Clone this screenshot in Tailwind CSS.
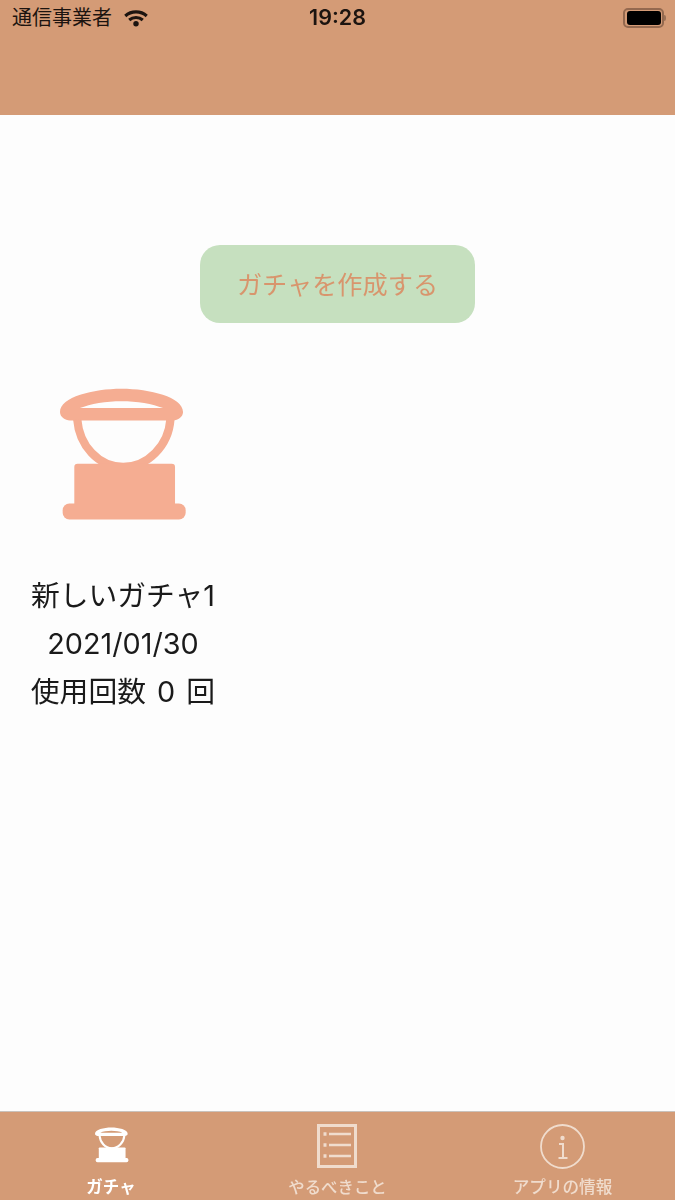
<!DOCTYPE html>
<html lang="ja">

<head>
  <meta charset="UTF-8">
  <meta name="viewport" content="width=device-width, initial-scale=1.0">
  <title>ガチャ</title>
  <script src="https://cdn.jsdelivr.net/npm/@tailwindcss/browser@4"></script>
</head>

<body class="bg-[#fdfdfd] font-['Inter','Noto_Sans_CJK_JP',sans-serif]">
  <div class="flex h-[1200px] w-[675px] flex-col overflow-hidden blur-[0.6px]">
    <!-- status bar + nav bar -->
    <header class="h-[115px] shrink-0 bg-[#d49b76]">
      <div class="grid h-[36px] grid-cols-3 items-center px-3 text-[#1c1410]">
        <div class="flex items-center gap-[12px]">
          <span class="text-[20px] leading-none">通信事業者</span>
          <svg class="h-[17px] w-[24px]" viewBox="0 0 23 16" fill="none" stroke="currentColor" stroke-width="3">
            <path d="M1.2 5.6C7 .4 16 .4 21.8 5.6" />
            <path d="M5 9.4c3.7-3.2 9.3-3.2 13 0" />
            <circle cx="11.5" cy="13" r="2.6" fill="currentColor" stroke="none" />
          </svg>
        </div>
        <div class="text-center text-[21.5px] leading-none font-semibold">19:28</div>
        <div class="-mr-[3px] flex items-center justify-end">
          <div class="flex h-[20px] w-[41px] items-center justify-center rounded-[5px] border-2 border-[#94694f]">
            <div class="h-[14px] w-[34px] rounded-[3px] bg-black"></div>
          </div>
          <div class="h-[6px] w-[2px] rounded-r-sm bg-[#9a7157]"></div>
        </div>
      </div>
    </header>

    <main class="flex grow flex-col">
      <div class="mt-[130px] flex justify-center">
        <button type="button" class="h-[78px] w-[275px] rounded-[20px] bg-[#c6e0bf] pt-[3px] text-[25.2px] text-[#d8956d]">ガチャを作成する</button>
      </div>

      <div class="mt-[64px] flex w-[248px] flex-col items-center">
        <svg class="h-[135px] w-[128px] text-[#f5ad92]" viewBox="120 50 385 405" fill="currentColor">
          <path fill-rule="evenodd" d="M120 125C120 80 220 55 305 55s185 25 185 70c0 15-15 25-30 25H150c-15 0-30-10-30-25ZM180 113c30-13 80-21 125-21s95 8 125 21Z" />
          <path fill="none" stroke="currentColor" stroke-width="25" d="M172 148C178 225 235 290 310 290C385 290 446 225 452 148" />
          <rect x="163" y="280" width="303" height="130" rx="10" />
          <rect x="128" y="400" width="370" height="48" rx="20" />
        </svg>
        <div class="mt-[50px] -translate-x-[1px] text-center text-[28.8px] leading-[48px] text-[#1a1a1a]">
          <p>新しいガチャ1</p>
          <p>2021/01/30</p>
          <p class="[word-spacing:3px]">使用回数 0 回</p>
        </div>
      </div>
    </main>

    <!-- tab bar -->
    <nav class="grid h-[89px] shrink-0 grid-cols-3 border-t border-[#c9c2bc] bg-[#d49b76]">
      <div class="flex flex-col items-center pt-[15px] text-white">
        <svg class="-ml-[2px] h-[36px] w-[34px]" viewBox="120 50 385 405" fill="currentColor">
          <path fill-rule="evenodd" d="M120 125C120 80 220 55 305 55s185 25 185 70c0 15-15 25-30 25H150c-15 0-30-10-30-25ZM180 113c30-13 80-21 125-21s95 8 125 21Z" />
          <path fill="none" stroke="currentColor" stroke-width="24" d="M172 148C178 225 235 290 310 290C385 290 446 225 452 148" />
          <rect x="163" y="280" width="303" height="130" rx="10" />
          <rect x="128" y="400" width="370" height="48" rx="20" />
        </svg>
        <span class="mt-[14px] -ml-[3px] text-[16.5px] leading-[20px] font-bold">ガチャ</span>
      </div>
      <div class="flex flex-col items-center pt-[12px] text-[#f0dccd]">
        <svg class="-ml-[1px] h-[44px] w-[40px]" viewBox="0 0 40 44" fill="none" stroke="currentColor">
          <rect x="1.5" y="1.5" width="37" height="41" stroke-width="3" />
          <path stroke-width="2.4" d="M12 10h22M12 21h22M12 32h22" />
          <path stroke-width="3.5" d="M6.5 10h3M6.5 21h3M6.5 32h3" />
        </svg>
        <span class="mt-[9px] text-[16.4px] leading-[20px] font-medium">やるべきこと</span>
      </div>
      <div class="flex flex-col items-center pt-[12px] text-[#f0dccd]">
        <svg class="h-[45px] w-[45px]" viewBox="0 0 45 45" fill="none" stroke="currentColor">
          <circle cx="22.5" cy="22.5" r="21.5" stroke-width="1.8" />
          <circle cx="22.5" cy="14" r="2.2" fill="currentColor" stroke="none" />
          <path stroke-width="2" d="M19 20h4v14M18.5 34h9" />
        </svg>
        <span class="mt-[8px] text-[16.6px] leading-[20px] font-medium">アプリの情報</span>
      </div>
    </nav>
  </div>
</body>

</html>
